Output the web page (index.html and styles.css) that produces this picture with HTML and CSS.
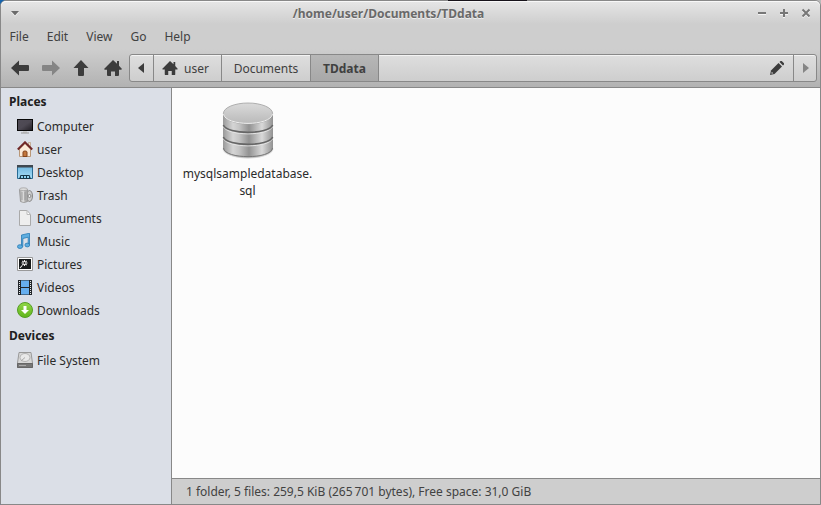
FILE: index.html
```html
<!DOCTYPE html>
<html lang="en">
<head>
<meta charset="utf-8">
<title>/home/user/Documents/TDdata</title>
<link rel="stylesheet" href="styles.css">
</head>
<body>
<div class="window">
  <span class="backdrop"></span>
  <header class="chrome">
    <div class="titlebar">
      <svg class="window-menu" width="10" height="7" viewBox="0 0 10 7"><path d="M1 2h8L5 6.500z" fill="#f4f4f4"/><path d="M1 1h8L5 5.500z" fill="#6b6b6b"/></svg>
      <h1 class="title">/home/user/Documents/TDdata</h1>
      <div class="controls">
        <svg width="10" height="10" viewBox="0 0 10 10"><path d="M1 6h8" stroke="#f4f4f4" stroke-width="2"/><path d="M1 5h8" stroke="#777" stroke-width="2"/></svg>
        <svg width="10" height="10" viewBox="0 0 10 10"><path d="M1 6h8M5 2v8" stroke="#f4f4f4" stroke-width="2"/><path d="M1 5h8M5 1v8" stroke="#777" stroke-width="2"/></svg>
        <svg width="10" height="10" viewBox="0 0 10 10"><path d="M1.500 2.500l7 7m0-7l-7 7" stroke="#f4f4f4" stroke-width="2"/><path d="M1.500 1.500l7 7m0-7l-7 7" stroke="#777" stroke-width="2"/></svg>
      </div>
    </div>
    <nav class="menubar"><span>File</span><span>Edit</span><span>View</span><span>Go</span><span>Help</span></nav>
    <div class="toolbar">
      <div class="tools">
        <svg width="18" height="16" viewBox="0 0 18 16"><path d="M0 8L8 .5V5h9q1 0 1 1v4q0 1-1 1H8v4.500z"/></svg>
        <svg class="disabled" width="18" height="16" viewBox="0 0 18 16"><path d="M18 8L10 .5V5H1Q0 5 0 6v4q0 1 1 1h9v4.500z"/></svg>
        <svg width="16" height="16" viewBox="0 0 16 16"><path d="M8 0l7.500 8H11v7q0 1-1 1H6q-1 0-1-1V8H.5z"/></svg>
        <svg class="home" width="18" height="16" viewBox="0 0 18 16"><path d="M9 0l4 3.800V1h2v4.700l3 3.300-.8.800H15V15q0 1-1 1h-3v-4.500H7V16H4q-1 0-1-1V9.800H.8L0 9z"/></svg>
      </div>
      <div class="pathbar">
        <div class="scroll left"><svg width="6" height="10" viewBox="0 0 6 10"><path d="M6 0v10L0 5z"/></svg></div>
        <div class="crumb crumb-user"><svg width="16" height="14" viewBox="0 0 18 16"><path d="M9 0l4 3.800V1h2v4.700l3 3.300-.8.800H15V15q0 1-1 1h-3v-4.500H7V16H4q-1 0-1-1V9.800H.8L0 9z"/></svg><span>user</span></div>
        <div class="crumb crumb-docs"><span>Documents</span></div>
        <div class="crumb crumb-active"><span>TDdata</span></div>
        <svg class="pencil" width="14" height="14" viewBox="0 0 14 14"><path d="M0 14l1-4.500L8.500 2 12 5.500 4.500 13z"/><path d="M9.500 1l1-1h1.200L14 2.300v1.200l-1 1z"/><path d="M1.700 10.700l1.600 1.600-1.800.4z" fill="#ddd"/></svg>
        <div class="scroll right"><svg width="6" height="10" viewBox="0 0 6 10"><path d="M0 0v10l6-5z"/></svg></div>
      </div>
    </div>
  </header>
  <div class="body">
    <aside class="sidebar">
      <h2>Places</h2>
      <ul>
        <li><svg viewBox="0 0 16 16"><defs><linearGradient id="scr" x2="1" y2="1"><stop stop-color="#504c56"/><stop offset=".5" stop-color="#4d4953"/><stop offset="1" stop-color="#242127"/></linearGradient></defs><path d="M6 13h4v2H6z" fill="#ccc"/><path d="M4 15h8" stroke="#999"/><path d="M0 1h16v12H0z" fill="#080808"/><path d="M1 2h14v10H1z" fill="url(#scr)"/></svg>Computer</li>
        <li><svg viewBox="0 0 16 16"><path d="M11.500 1.500h2V6h-2z" fill="#eee0cf" stroke="#b99b80" stroke-width=".7"/><path d="M2.500 8L8 2.500 13.500 8v7.500h-11z" fill="#fbead8" stroke="#b99777"/><path d="M6 15.500V11q0-1 2-1t2 1v4.500z" fill="#c2763c" stroke="#84451d"/><path d="M.8 8.500L8 1.300l7.200 7.200" fill="none" stroke="#702727" stroke-width="2"/></svg>user</li>
        <li><svg viewBox="0 0 16 16"><defs><linearGradient id="desk" x2="0" y2="1"><stop stop-color="#70b7df"/><stop offset="1" stop-color="#a7def8"/></linearGradient></defs><path d="M.5 2.500h15v12H.5z" fill="url(#desk)" stroke="#286b94"/><path d="M0 1h16v2.500H0z" fill="#3f4850"/><path d="M2 15l1.500-4h9L14 15z" fill="#17394c"/><path d="M4 13h2m1 0h2m1 0h2" stroke="#8ed5f4" stroke-width="2"/></svg>Desktop</li>
        <li><svg viewBox="0 0 16 16"><defs><linearGradient id="bin"><stop stop-color="#999"/><stop offset=".35" stop-color="#eee"/><stop offset="1" stop-color="#999"/></linearGradient></defs><ellipse cx="12.500" cy="9" rx="3" ry="5.500" fill="#ccc" stroke="#888"/><path d="M2.500 2.500q3.500-2 8 0v12q-4 2-7 0z" fill="url(#bin)" stroke="#9b9b9b"/><path d="M5 4.500v9M8 4.500v9" stroke="#909090"/><ellipse cx="6.500" cy="2.200" rx="4" ry="1.400" fill="#ddd" stroke="#999" stroke-width=".7"/><circle cx="12.500" cy="9" r="1.500" fill="#eee" stroke="#888"/></svg>Trash</li>
        <li><svg viewBox="0 0 16 16"><path d="M2.500.5H10l3.500 4v11h-11z" fill="#eee" stroke="#aaa"/><path d="M10 .5v4h3.500z" fill="#fff" stroke="#bbb"/></svg>Documents</li>
        <li><svg viewBox="0 0 16 16"><g fill="#5faee0" stroke="#287bb5" stroke-width=".8"><path d="M4.500 2L12.500.2v11h-1.300V4.200l-5.400 1.300v8H4.500z"/><ellipse cx="3" cy="13.600" rx="2.600" ry="1.900"/><ellipse cx="10.300" cy="12" rx="2.400" ry="1.900"/></g></svg>Music</li>
        <li><svg viewBox="0 0 16 16"><path d="M.5 1.500h15v13H.5z" fill="#fff" stroke="#999"/><path d="M2 3h12v10H2z" fill="#171a1b"/><path d="M7.500 4v6M4.500 7h6M5.300 4.800l4.400 4.400m0-4.400L5.300 9.200M3 12l2.200-2.500" stroke="#eee" stroke-width="1.100"/><circle cx="7.500" cy="7" r="1.100" fill="#222"/></svg>Pictures</li>
        <li><svg viewBox="0 0 16 16"><path d="M1 1h14v15H1z" fill="#22262a"/><path d="M4 1.500h8V8H4zM4 9h8v6.500H4z" fill="#66aff0"/><path d="M2.500 2v14M13.500 2v14" stroke="#e6eaec" stroke-dasharray="1 1"/></svg>Videos</li>
        <li><svg viewBox="0 0 16 16"><defs><linearGradient id="down" x2="0" y2="1"><stop stop-color="#91d649"/><stop offset="1" stop-color="#60b51b"/></linearGradient></defs><circle cx="8" cy="8" r="7.500" fill="url(#down)" stroke="#559e24"/><path d="M6.500 4h3v4H12l-4 4-4-4h2.500z" fill="#fff"/></svg>Downloads</li>
      </ul>
      <h2 class="devices">Devices</h2>
      <ul>
        <li><svg viewBox="0 0 16 16"><path d="M2 .5h12L15.500 11v4.500H.5V11z" fill="#d8d8d8" stroke="#999"/><ellipse cx="8" cy="5.500" rx="5" ry="4" fill="#e9e9e9" stroke="#b3b3b3"/><path d="M4 9l4-3.500" stroke="#aaa"/><path d="M.5 11.500h15v4H.5z" fill="#777" stroke="#666"/><path d="M2 13.500h7" stroke="#aaa"/></svg>File System</li>
      </ul>
    </aside>
    <div class="content">
      <main class="files">
        <div class="file">
          <svg width="52" height="57" viewBox="0 0 52 57">
            <defs>
              <linearGradient id="metal"><stop stop-color="#999"/><stop offset=".2" stop-color="#d5d5d5"/><stop offset=".32" stop-color="#c5c5c5"/><stop offset=".52" stop-color="#929292"/><stop offset=".78" stop-color="#d9d9d9"/><stop offset="1" stop-color="#929292"/></linearGradient>
              <linearGradient id="top" x2="0" y2="1"><stop stop-color="#dadada"/><stop offset="1" stop-color="#b9b9b9"/></linearGradient>
              <radialGradient id="shade"><stop offset=".7" stop-color="#777"/><stop offset="1" stop-color="#777" stop-opacity="0"/></radialGradient>
            </defs>
            <ellipse cx="26" cy="47" rx="26" ry="10" fill="url(#shade)"/>
            <path d="M1 12v34c0 12 50 12 50 0V12z" fill="url(#metal)"/>
            <path d="M1.500 46c1 11.500 48 11.500 49 0" fill="none" stroke="#777"/>
            <g fill="none">
              <path d="M1.300 24.500c4 9.800 45.400 9.800 49.400 0M1.300 36.500c4 9.800 45.400 9.800 49.400 0" stroke="#e4e4e4"/>
              <path d="M1.300 23c4 9.800 45.400 9.800 49.400 0M1.300 35c4 9.800 45.400 9.800 49.400 0" stroke="#666" stroke-width="1.600"/>
            </g>
            <ellipse cx="26" cy="11.500" rx="24.600" ry="10.500" fill="url(#top)" stroke="#a0a0a0" stroke-width=".8"/>
            <path d="M1.500 12c2 12.500 47 12.500 49 0" fill="none" stroke="#eee"/>
          </svg>
          <span class="name">mysqlsampledatabase.<br>sql</span>
        </div>
      </main>
      <footer class="status">1 folder, 5 files: 259,5 KiB (265&#8239;701 bytes), Free space: 31,0 GiB</footer>
    </div>
  </div>
</div>
</body>
</html>
```
FILE: styles.css
```css
* { box-sizing: border-box; }
body {
  margin: 0;
  background: linear-gradient(90deg, #1764ad 50%, #b9b9b9 50%);
  font: 12px/17px "Noto Sans", sans-serif;
  color: #2b2b2b;
}
svg { display: block; flex: none; }
.window {
  position: relative;
  display: flex;
  flex-direction: column;
  width: 821px;
  height: 505px;
  border: 1px solid #888;
  border-radius: 6px 6px 0 0;
  background: #cecece;
}
.backdrop { position: absolute; top: -1px; left: 447px; width: 79px; height: 1px; background: #17131a; }
.chrome {
  flex: none;
  height: 87px;
  border-bottom: 1px solid #888;
  border-radius: 5px 5px 0 0;
  background: linear-gradient(#e6e6e6, #cecece 23px, #cecece 48px, #b2b2b2 86px);
  box-shadow: inset 0 1px #f8f8f8;
}
.titlebar { display: flex; align-items: center; height: 24px; padding: 0 9px; }
.window-menu { width: 10px; }
.title {
  flex: 1;
  margin: 0;
  text-align: center;
  font-size: 12px;
  line-height: 17px;
  font-weight: 700;
  color: #696969;
  text-shadow: 0 1px #eee;
}
.controls { display: flex; gap: 12px; }
.menubar { display: flex; gap: 18px; height: 24px; padding: 3px 8.500px; color: #414141; }
.toolbar { display: flex; height: 38px; padding: 5px 3px 5px 10px; }
.tools { display: flex; align-items: center; gap: 13px; width: 118px; fill: #3c3c3c; }
.tools .disabled { fill: #858585; }
.tools .home { margin-left: 2px; }
.pathbar {
  display: flex;
  flex: 1;
  align-items: stretch;
  height: 28px;
  border: 1px solid #888;
  border-radius: 3px;
  background: linear-gradient(#dedede, #cecece);
  box-shadow: inset 0 1px #f3f3f3;
  color: #404040;
}
.scroll, .crumb { display: flex; align-items: center; justify-content: center; }
.scroll { width: 24px; fill: #3c3c3c; }
.scroll.left { padding-right: 2px; }
.scroll.left, .crumb { border-right: 1px solid #888; }
.scroll.right { width: 23px; border-left: 1px solid #888; padding-left: 2px; fill: #858585; }
.crumb { gap: 6px; fill: #3c3c3c; }
.crumb-user { width: 68px; padding-right: 4px; }
.crumb-docs { width: 89px; }
.crumb-active { width: 68px; background: linear-gradient(#b7b7b7, #a8a8a8); font-weight: 700; }
.pencil { margin: auto 9px auto auto; fill: #3c3c3c; }
.body { display: flex; flex: 1; min-height: 0; }
.sidebar { width: 171px; flex: none; padding: 5px 8px; border-right: 1px solid #888; background: #dbdfe7; }
.sidebar h2 { margin: 0; font-size: 12px; line-height: 17px; font-weight: 700; color: #202020; }
.sidebar ul { margin: 5px 0 0; padding: 0; list-style: none; }
.sidebar li { display: flex; align-items: center; gap: 4px; height: 23px; padding-left: 8px; }
.sidebar li svg { width: 16px; height: 16px; margin-top: -1px; }
.sidebar .devices { margin-top: 5px; }
.content { display: flex; flex: 1; flex-direction: column; min-width: 0; }
.files { flex: 1; padding: 14px 9px; background: #fcfcfc; }
.file { display: flex; flex-direction: column; align-items: center; gap: 6px; width: 133px; text-align: center; }
.status { flex: none; height: 26px; padding: 4px 14px; border-top: 1px solid #888; background: #cecece; color: #424242; }
```
